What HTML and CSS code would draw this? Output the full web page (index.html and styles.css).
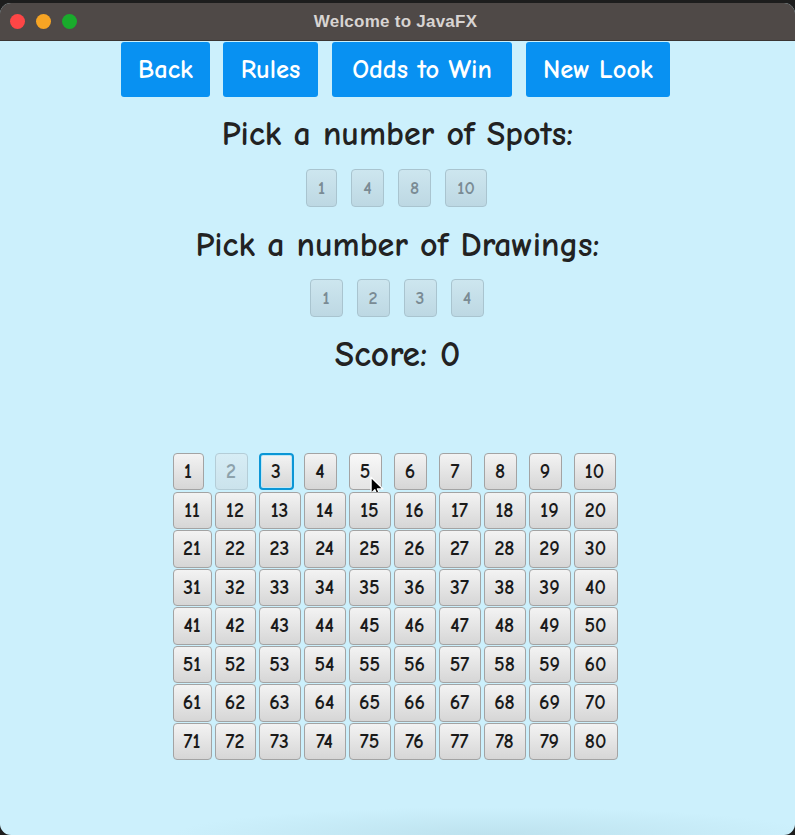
FILE: index.html
```html
<!DOCTYPE html>
<html>
<head>
<meta charset="utf-8">
<title>Welcome to JavaFX</title>
<link rel="stylesheet" href="styles.css">
</head>
<body>
<div class="window">
  <div class="titlebar">
    <div class="lights">
      <span class="light red"></span>
      <span class="light yellow"></span>
      <span class="light green"></span>
    </div>
    <div class="title">Welcome to JavaFX</div>
  </div>
  <div class="content">
    <div class="menu">
      <button class="menu-btn w-back">Back</button>
      <button class="menu-btn w-rules">Rules</button>
      <button class="menu-btn w-odds">Odds to Win</button>
      <button class="menu-btn w-look">New Look</button>
    </div>
    <h2 class="heading h-spots">Pick a number of Spots:</h2>
    <div class="choices c-spots">
      <button class="choice">1</button>
      <button class="choice">4</button>
      <button class="choice">8</button>
      <button class="choice wide">10</button>
    </div>
    <h2 class="heading h-draw">Pick a number of Drawings:</h2>
    <div class="choices c-draw">
      <button class="choice">1</button>
      <button class="choice">2</button>
      <button class="choice">3</button>
      <button class="choice">4</button>
    </div>
    <h2 class="heading h-score">Score: 0</h2>
    <div class="board-wrap">
      <div class="board">
        <button class="cell r1 narrow">1</button>
        <button class="cell r1 disabled">2</button>
        <button class="cell r1 focused">3</button>
        <button class="cell r1">4</button>
        <button class="cell r1 hover">5<svg class="cursor" width="15" height="23" viewBox="0 0 14 21"><path d="M1 1 L1 16 L4.5 12.5 L7.2 19 L9.6 18 L7 11.8 L12 11.8 Z" fill="#000" stroke="#fff" stroke-width="1.2" stroke-linejoin="round"/></svg></button>
        <button class="cell r1">6</button>
        <button class="cell r1">7</button>
        <button class="cell r1">8</button>
        <button class="cell r1">9</button>
        <button class="cell r1 wide">10</button>
        <button class="cell">11</button><button class="cell">12</button><button class="cell">13</button><button class="cell">14</button><button class="cell">15</button><button class="cell">16</button><button class="cell">17</button><button class="cell">18</button><button class="cell">19</button><button class="cell">20</button>
        <button class="cell">21</button><button class="cell">22</button><button class="cell">23</button><button class="cell">24</button><button class="cell">25</button><button class="cell">26</button><button class="cell">27</button><button class="cell">28</button><button class="cell">29</button><button class="cell">30</button>
        <button class="cell">31</button><button class="cell">32</button><button class="cell">33</button><button class="cell">34</button><button class="cell">35</button><button class="cell">36</button><button class="cell">37</button><button class="cell">38</button><button class="cell">39</button><button class="cell">40</button>
        <button class="cell">41</button><button class="cell">42</button><button class="cell">43</button><button class="cell">44</button><button class="cell">45</button><button class="cell">46</button><button class="cell">47</button><button class="cell">48</button><button class="cell">49</button><button class="cell">50</button>
        <button class="cell">51</button><button class="cell">52</button><button class="cell">53</button><button class="cell">54</button><button class="cell">55</button><button class="cell">56</button><button class="cell">57</button><button class="cell">58</button><button class="cell">59</button><button class="cell">60</button>
        <button class="cell">61</button><button class="cell">62</button><button class="cell">63</button><button class="cell">64</button><button class="cell">65</button><button class="cell">66</button><button class="cell">67</button><button class="cell">68</button><button class="cell">69</button><button class="cell">70</button>
        <button class="cell">71</button><button class="cell">72</button><button class="cell">73</button><button class="cell">74</button><button class="cell">75</button><button class="cell">76</button><button class="cell">77</button><button class="cell">78</button><button class="cell">79</button><button class="cell">80</button>
      </div>
    </div>
  </div>
</div>
</body>
</html>
```

FILE: styles.css
```css
* { box-sizing: border-box; }
html, body {
  margin: 0;
  padding: 0;
  width: 795px;
  height: 835px;
  background: #1d1d1d;
  overflow: hidden;
}
.window {
  margin-top: 3px;
  width: 795px;
  height: 832px;
  border-radius: 11px;
  overflow: hidden;
  display: flex;
  flex-direction: column;
  background:
    radial-gradient(ellipse 320px 28px at 62% 100%, #bde2ee, rgba(204,240,252,0)),
    #ccf0fc;
}
.titlebar {
  height: 38px;
  flex: none;
  background: #4f4947;
  border-bottom: 1px solid #3a3533;
  display: flex;
  align-items: center;
  position: relative;
}
.lights {
  display: flex;
  gap: 11px;
  padding-left: 10px;
}
.light {
  width: 15px;
  height: 15px;
  border-radius: 50%;
  display: block;
}
.red { background: #fd4646; }
.yellow { background: #f6a424; }
.green { background: #19ab2c; }
.title {
  position: absolute;
  left: 0;
  right: 0;
  top: 0;
  bottom: 0;
  display: flex;
  align-items: center;
  justify-content: center;
  font-family: "Liberation Sans", Arial, sans-serif;
  font-weight: bold;
  font-size: 17px;
  letter-spacing: 0.25px;
  color: #d8d4d2;
  padding-right: 4px;
}
.content {
  display: flex;
  flex-direction: column;
  align-items: center;
  font-family: "Comic Sans MS", "Comic Neue", "Open Sans", sans-serif;
  font-weight: bold;
  color: #1f1f1f;
}
.menu {
  display: flex;
  gap: 13px;
  padding-top: 1px;
  padding-right: 4px;
}
.menu-btn {
  height: 55px;
  border: none;
  border-radius: 3px;
  background: #0891f2;
  color: #fff;
  font-family: inherit;
  font-weight: bold;
  font-size: 26.5px;
  padding: 0;
  margin: 0;
}
.w-back { width: 89px; }
.w-rules { width: 95px; }
.w-odds { width: 180px; margin-left: 1px; }
.w-look { width: 144px; margin-left: 1px; }
.heading {
  margin: 0;
  font-weight: bold;
  font-size: 34px;
  line-height: 36px;
  height: 36px;
  color: #222;
}
.h-spots { margin-top: 19px; }
.h-draw { margin-top: 20px; }
.h-score { margin-top: 20px; font-size: 35.5px; }
.choices {
  display: flex;
  gap: 14px;
  padding-right: 2px;
}
.c-spots { margin-top: 17px; }
.c-draw { margin-top: 16px; }
.choice {
  width: 33px;
  height: 38px;
  padding: 0;
  margin: 0;
  border: 1px solid #a9c4cf;
  border-radius: 4px;
  background: linear-gradient(#cde6ef, #bdd8e3);
  color: #7a8b94;
  font-family: inherit;
  font-weight: bold;
  font-size: 18px;
}
.c-spots .choice:first-child { width: 31px; }
.choice.wide { width: 42px; }
.board-wrap {
  margin-top: 80px;
  padding-right: 5px;
}
.board {
  display: grid;
  grid-template-columns: 39px 41px 42px 42px 42px 42px 42px 42px 42px 44px;
  grid-auto-rows: 37.5px;
  column-gap: 3px;
  row-gap: 1px;
}
.cell {
  position: relative;
  width: 100%;
  height: 100%;
  padding: 0;
  margin: 0;
  border: 1px solid #a3a3a3;
  border-radius: 4px;
  background: linear-gradient(#f3f3f3, #d6d6d6);
  color: #1a1a1a;
  font-family: inherit;
  font-weight: bold;
  font-size: 20px;
}
.cell.r1 { width: 33px; height: 37px; justify-self: start; }
.cell.r1.narrow { width: 31px; }
.cell.r1.wide { width: 42px; }
.cell.focused {
  width: 35px;
  border: 2px solid #0b96d6;
  box-shadow: inset 0 0 0 1px #bfe6f6;
}
.cell.disabled {
  background: linear-gradient(#d7edf5, #cbe3ec);
  border-color: #b4cdd7;
  color: #8da2ab;
}
.cell.hover {
  background: linear-gradient(#f8f8f8, #e4e4e4);
}
.cursor {
  position: absolute;
  left: 20px;
  top: 22px;
  overflow: visible;
}
```
